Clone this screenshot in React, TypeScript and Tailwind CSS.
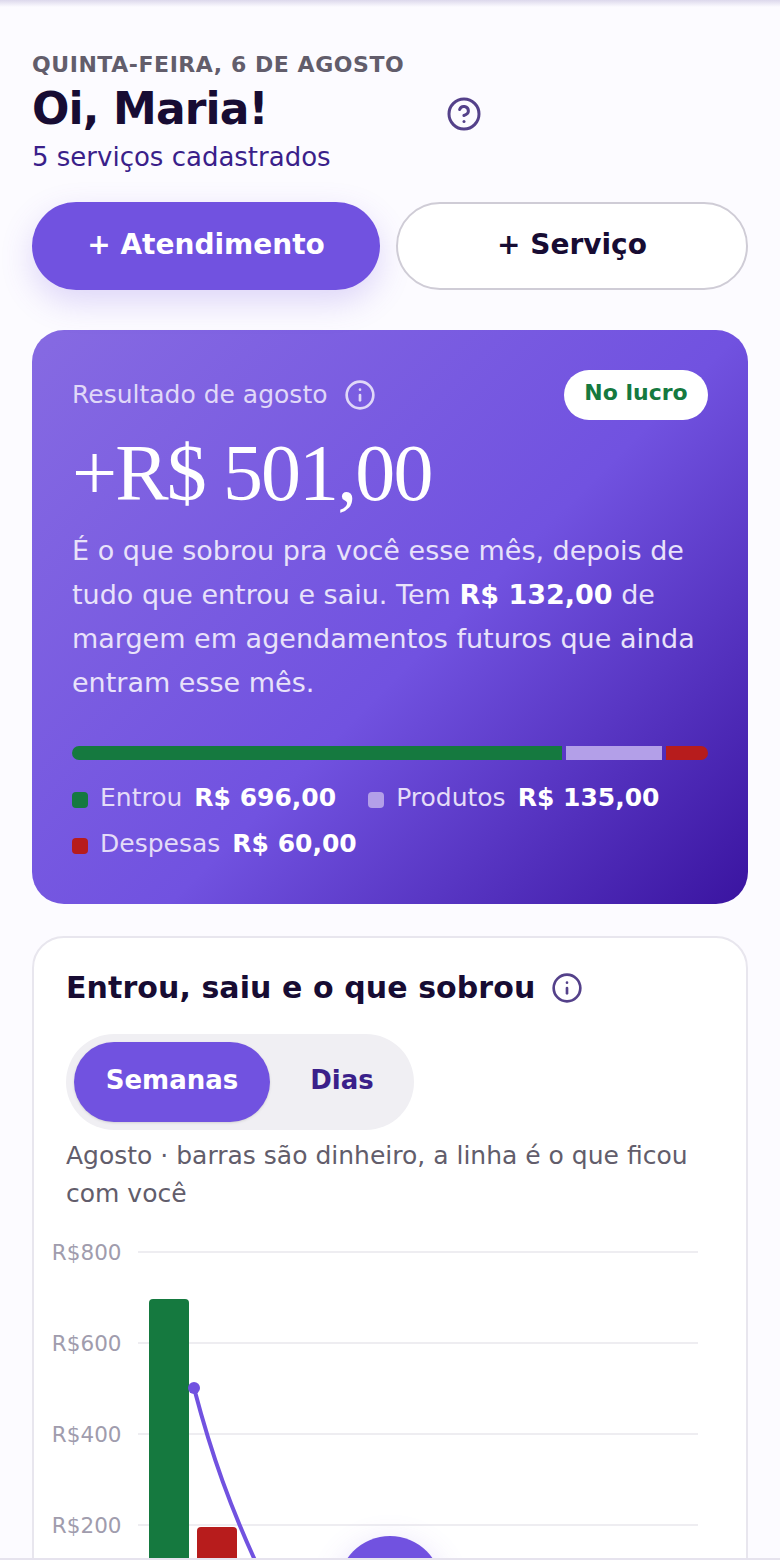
import { CircleHelp, Info } from "lucide-react";

const segments = [
  { key: "entrou", bar: "bg-[#15793f]", grow: "flex-[490_1_0]" },
  { key: "produtos", bar: "bg-[#b39fe8]", grow: "flex-[96_1_0]" },
  { key: "despesas", bar: "bg-[#b71c1c]", grow: "flex-[42_1_0]" },
];

function LegendItem({ color, label, value }: { color: string; label: string; value: string }) {
  return (
    <div className="flex items-center">
      <span className={`w-4 h-4 mt-[4px] rounded-[4px] ${color}`} />
      <span className="ml-3 text-[#e4dcf8]">{label}</span>
      <span className="ml-3 font-bold text-white">{value}</span>
    </div>
  );
}

function Chart() {
  const ticks = [
    { y: 22, label: "R$800" },
    { y: 113, label: "R$600" },
    { y: 204, label: "R$400" },
    { y: 295, label: "R$200" },
  ];
  return (
    <svg width="680" height="400" viewBox="0 0 680 400" className="mt-[17px] -ml-[32px] block">
      {ticks.map((t) => (
        <g key={t.label}>
          <line x1="104" x2="664" y1={t.y} y2={t.y} stroke="#eeedf1" strokeWidth="2" />
          <text
            x="87.5"
            y={t.y + 8}
            textAnchor="end"
            fontSize="21.5"
            fill="#a09cad"
            fontFamily="'DejaVu Sans', sans-serif"
          >
            {t.label}
          </text>
        </g>
      ))}
      <path d="M119 69h32a4 4 0 0 1 4 4v340h-40V73a4 4 0 0 1 4-4z" fill="#15793f" />
      <path d="M167 297h32a4 4 0 0 1 4 4v112h-40V301a4 4 0 0 1 4-4z" fill="#b71c1c" />
      <path d="M160 158C175 215 195 280 240 370" fill="none" stroke="#7152e0" strokeWidth="4" />
      <circle cx="160" cy="158" r="6" fill="#7152e0" />
    </svg>
  );
}

export default function App() {
  return (
    <div className="relative w-[780px] h-[1560px] overflow-hidden bg-[#fcfbff] font-['DejaVu_Sans',sans-serif]">
      <div className="absolute inset-x-0 top-0 h-[7px] bg-gradient-to-b from-[#dcd8ec] to-transparent" />
      <main className="px-8 pt-[51px]">
        <header className="flex items-start">
          <div className="w-[415px]">
            <p className="text-[22px] leading-[28px] font-bold tracking-[0.55px] text-[#625d6b]">
              QUINTA-FEIRA, 6 DE AGOSTO
            </p>
            <h1 className="text-[44px] leading-[59px] font-bold tracking-[-0.88px] text-[#170c33]">Oi, Maria!</h1>
            <p className="text-[26px] leading-[38px] text-[#3a1f8a]">5 serviços cadastrados</p>
          </div>
          <CircleHelp size={36} strokeWidth={2} className="mt-[45px] -ml-px text-[#54418a]" />
        </header>

        <div className="mt-[26px] flex gap-4">
          <button className="w-[348px] h-[88px] pb-[2px] rounded-[44px] bg-[#7152e0] text-[28px] font-bold text-white shadow-[0_12px_32px_rgba(113,82,224,0.22)]">
            + Atendimento
          </button>
          <button className="flex-1 h-[88px] pb-[2px] rounded-[44px] border-2 border-[#cfccd6] bg-white text-[28px] font-bold text-[#170c33]">
            + Serviço
          </button>
        </div>

        <section className="mt-10 h-[574px] rounded-[32px] px-10 pt-10 bg-[linear-gradient(135deg,#866ae2_0%,#7152e0_55%,#3a14a0_100%)]">
          <div className="flex items-start justify-between">
            <div className="flex items-center h-[50px]">
              <span className="text-[25px] text-[#e0d8f8]">Resultado de agosto</span>
              <Info size={32} strokeWidth={2} className="ml-[17px] text-[#e0d8f8]" />
            </div>
            <span className="h-[50px] w-[144px] pb-[6px] rounded-[25px] bg-white flex items-center justify-center text-[22px] font-bold text-[#15793f]">
              No lucro
            </span>
          </div>
          <p className="mt-[8px] text-[80px] leading-[90px] tracking-[-1.9px] text-white font-['Liberation_Serif',serif]">
            +R$ 501,00
          </p>
          <p className="mt-[11px] text-[27px] leading-[44px] text-[#e8e2fa]">
            É o que sobrou pra você esse mês, depois de tudo que entrou e saiu. Tem{" "}
            <b className="text-white">R$ 132,00</b> de margem em agendamentos futuros que ainda entram esse mês.
          </p>
          <div className="mt-[41px] flex h-[14px] gap-1 overflow-hidden rounded-[7px]">
            {segments.map((s) => (
              <div key={s.key} className={`${s.grow} ${s.bar}`} />
            ))}
          </div>
          <div className="mt-[21px] flex flex-wrap gap-x-[32px] gap-y-[12px] text-[25px] leading-[34px]">
            <LegendItem color="bg-[#15793f]" label="Entrou" value="R$ 696,00" />
            <LegendItem color="bg-[#b39fe8]" label="Produtos" value="R$ 135,00" />
            <LegendItem color="bg-[#b71c1c]" label="Despesas" value="R$ 60,00" />
          </div>
        </section>

        <section className="mt-8 h-[700px] rounded-[32px] border-2 border-[#e8e6ee] bg-white px-8 pt-[30px]">
          <div className="flex items-center">
            <h2 className="text-[30px] leading-[40px] tracking-[0.08px] font-bold text-[#170c33]">
              Entrou, saiu e o que sobrou
            </h2>
            <Info size={32} strokeWidth={2} className="ml-[16px] text-[#54418a]" />
          </div>
          <div className="mt-[26px] flex w-[348px] h-[96px] rounded-[48px] bg-[#f0eff3] p-2">
            <div className="w-[196px] pb-[4px] rounded-[40px] bg-[#7152e0] flex items-center justify-center text-[26px] font-bold text-white shadow-sm">
              Semanas
            </div>
            <div className="flex-1 pl-2 pb-[4px] flex items-center justify-center text-[26px] font-bold text-[#3a1f8a]">
              Dias
            </div>
          </div>
          <p className="mt-[7px] text-[25px] leading-[38px] text-[#625d6b]">
            Agosto · barras são dinheiro, a linha é o que ficou com você
          </p>
          <Chart />
        </section>
      </main>

      <div className="absolute left-1/2 top-[1536px] w-[104px] h-[104px] -translate-x-1/2 rounded-full bg-[#7152e0] shadow-[0_8px_32px_rgba(113,82,224,0.2)]" />
      <div className="absolute inset-x-0 bottom-0 h-[2px] bg-[#e6e3ee]" />
    </div>
  );
}
